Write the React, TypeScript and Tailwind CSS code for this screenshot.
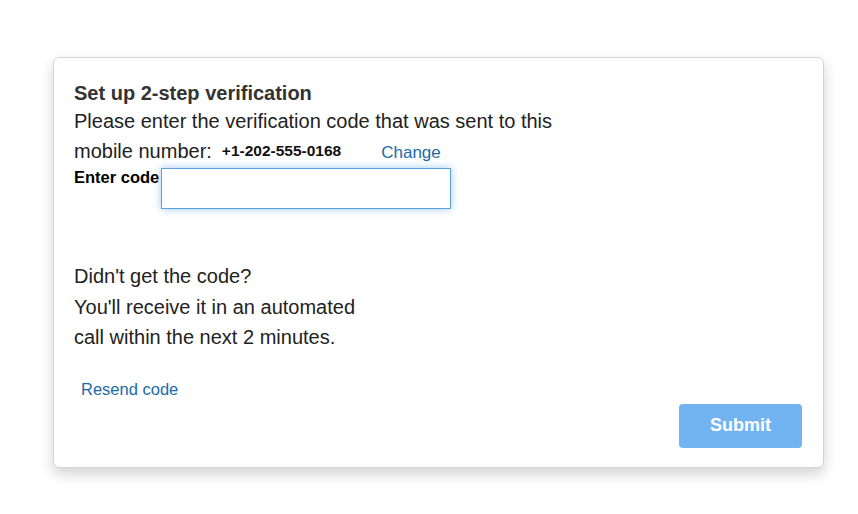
export default function App() {
  return (
    <div className="min-h-screen bg-white pt-[57px] pl-[53px] font-['Liberation_Sans',Arial,sans-serif]">
      <div className="w-[771px] h-[411px] rounded-[6px] border border-[#d4d4d4] bg-white shadow-[0_6px_14px_rgba(0,0,0,0.18)] pl-5 pr-[21px] pt-[22px] flex flex-col">
        <h1 className="text-[20px] leading-[26px] font-bold text-[#333]">Set up 2-step verification</h1>
        <p className="text-[20px] leading-[30px] text-[#222]">Please enter the verification code that was sent to this</p>
        <div className="flex items-baseline h-[31px] leading-[31px]">
          <span className="text-[20px] text-[#222]">mobile number:</span>
          <span className="ml-[10px] text-[15.5px] font-bold text-[#111] relative -top-[2px]">+1-202-555-0168</span>
          <a className="ml-[40px] text-[17px] text-[#1b6aa8]" href="#">Change</a>
        </div>
        <div className="flex items-start">
          <label className="text-[16.5px] leading-[18px] font-bold text-black mt-[1px]">Enter code</label>
          <input
            className="ml-[2px] mt-[1px] w-[290px] h-[41px] border border-[#5aa2dc] outline-none shadow-[0_0_8px_rgba(70,150,230,0.5)]"
            type="text"
          />
        </div>
        <div className="mt-[52px] text-[20px] leading-[30.5px] text-[#222]">
          <p>Didn't get the code?</p>
          <p>You'll receive it in an automated</p>
          <p>call within the next 2 minutes.</p>
        </div>
        <div className="mt-[26px] pl-[7px] leading-[20px]">
          <a className="text-[16.5px] text-[#1b6aa8]" href="#">Resend code</a>
        </div>
        <div className="flex justify-end mt-[4px]">
          <button className="w-[123px] h-[44px] rounded-[4px] bg-[#72b4f2] text-white text-[18px] font-bold">Submit</button>
        </div>
      </div>
    </div>
  )
}
